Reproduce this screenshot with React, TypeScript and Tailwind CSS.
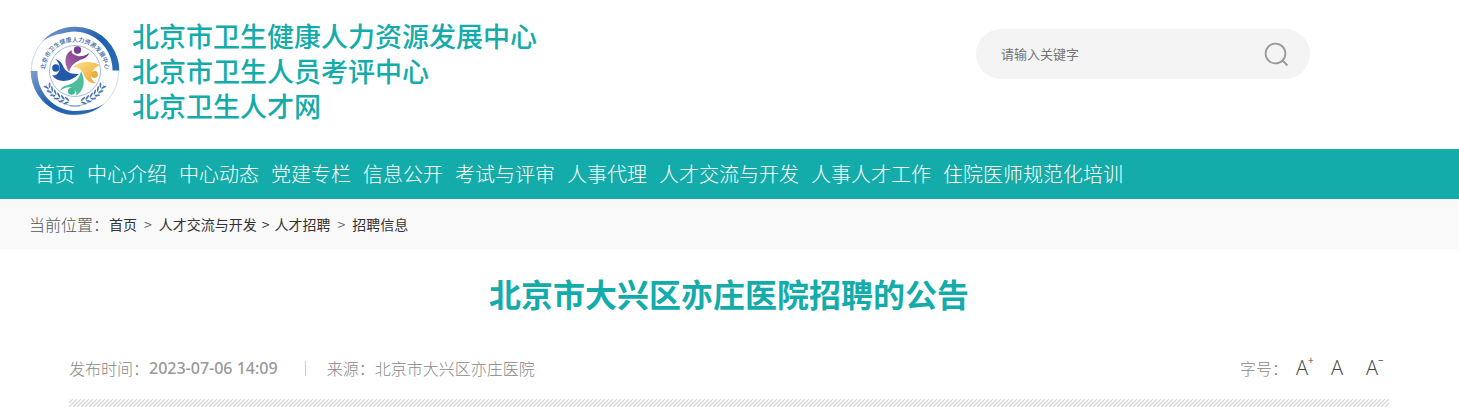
const NAV_LINKS = [
  "首页",
  "中心介绍",
  "中心动态",
  "党建专栏",
  "信息公开",
  "考试与评审",
  "人事代理",
  "人才交流与开发",
  "人事人才工作",
  "住院医师规范化培训",
];

const SITE_NAMES = [
  "北京市卫生健康人力资源发展中心",
  "北京市卫生人员考评中心",
  "北京卫生人才网",
];

const BREADCRUMBS = [
  { label: "首页", sep: "mx-[7px] text-[#666]" },
  { label: "人才交流与开发", sep: "mx-[5px] text-[#333]" },
  { label: "人才招聘", sep: "mx-[7px] text-[#666]" },
  { label: "招聘信息", sep: "" },
];

const FONT_SIZES = [
  { sign: "+", label: "放大字号" },
  { sign: "", label: "默认字号" },
  { sign: "−", label: "缩小字号" },
];

const LEAVES = [12, 21, 30, 39, 48, 57];

function Emblem() {
  return (
    <svg viewBox="0 0 90 90" className="mt-2 size-[90px] shrink-0" role="img" aria-label="北京市卫生健康人力资源发展中心">
      <defs>
        <path id="ring-text" d="M15.5 51 A30 30 0 1 1 74.5 51" />
        <linearGradient id="ring" x1="0" y1="0" x2="1" y2="1">
          <stop offset="0" stopColor="#7f9fd0" />
          <stop offset="0.5" stopColor="#1f5fae" />
          <stop offset="1" stopColor="#2c6cb6" />
        </linearGradient>
        <linearGradient id="purple" x1="1" y1="0" x2="0" y2="1">
          <stop offset="0" stopColor="#6d2f86" />
          <stop offset="1" stopColor="#b56cae" />
        </linearGradient>
        <linearGradient id="gold" x1="0" y1="0" x2="1" y2="1">
          <stop offset="0" stopColor="#fbe08c" />
          <stop offset="1" stopColor="#eda52c" />
        </linearGradient>
      </defs>
      <circle cx="45" cy="45" r="43.8" fill="#fff" stroke="#b9cbe5" strokeWidth="0.7" />
      {/* outer crescents */}
      <path d="M12 15.5 A44.3 44.3 0 0 1 89.3 44.5 L82.5 44.5 A38.5 38.5 0 0 0 32 7.5 A44 44 0 0 0 12 15.5Z" fill="url(#ring)" />
      <path d="M0.7 45 L7.5 45 A38.5 38.5 0 0 0 52 84.5 A46 46 0 0 0 74 78 A44.3 44.3 0 0 1 0.7 45Z" fill="url(#ring)" />
      <circle cx="45" cy="45" r="25.5" fill="#fff" stroke="#8fabd3" strokeWidth="0.8" />
      <text fontSize="6" fill="#3b69a8" fontFamily="'Liberation Serif', 'Noto Sans CJK SC', serif">
        <textPath href="#ring-text" startOffset="50%" textAnchor="middle">
          北京市卫生健康人力资源发展中心
        </textPath>
      </text>
      {/* wheat ears */}
      {LEAVES.map((angle) => (
        <g key={angle} fill="#4a77b5">
          <g transform={`rotate(${angle} 45 45)`}>
            <ellipse cx="43" cy="74" rx="2.9" ry="0.9" transform="rotate(32 43 74)" />
            <ellipse cx="43" cy="78" rx="2.9" ry="0.9" transform="rotate(-32 43 78)" />
          </g>
          <g transform={`rotate(${-angle} 45 45)`}>
            <ellipse cx="47" cy="74" rx="2.9" ry="0.9" transform="rotate(-32 47 74)" />
            <ellipse cx="47" cy="78" rx="2.9" ry="0.9" transform="rotate(32 47 78)" />
          </g>
        </g>
      ))}
      <path d="M16 59 A33 33 0 0 0 50 80 M74 59 A33 33 0 0 1 40 80" fill="none" stroke="#4a77b5" strokeWidth="0.6" />
      {/* four figures */}
      <path d="M42 24 C35 27 33 36 39 46 C41 39 46 35 53 33 C57 31 59 29 59 27 C54 31 49 31 45 29 C42 28 41 26 42 24Z" fill="url(#purple)" />
      <circle cx="47.5" cy="24" r="3.7" fill="#7c3b92" />
      <path d="M43 41 C49 36 60 34 70 39 C66 41 63 43 62 46 C60 51 62 55 66 57 C60 58 56 54 54 49 C52 44 49 41 43 41Z" fill="url(#gold)" />
      <circle cx="64.5" cy="48.5" r="3.4" fill="#efac38" />
      <path d="M25 33 C30 37 31 43 28 47 C27 49 24 50 22 49 C27 57 40 57 49 48 C42 48 37 47 34 42 C32 37 30 34 25 33Z" fill="#2459a9" />
      <circle cx="25.8" cy="42" r="3.7" fill="#2459a9" />
      <path d="M51 45 C50 52 45 57 38 59 C33 60 31 62 30 65 C36 60 43 60 46 66 C47 68 46 69 45 70 C54 66 56 55 51 45Z" fill="#4dbd9c" />
      <circle cx="41.5" cy="65.3" r="3.5" fill="#3fb894" />
    </svg>
  );
}

function SearchBox() {
  return (
    <form className="flex h-[50px] w-[334px] items-center rounded-full bg-[#f4f4f4] pr-[21px] pl-[25px]" onSubmit={(e) => e.preventDefault()}>
      <input
        type="text"
        aria-label="请输入关键字"
        placeholder="请输入关键字"
        className="min-w-0 flex-1 bg-transparent text-[13px] outline-none placeholder:text-[#757575]"
      />
      <button type="submit" aria-label="搜索">
        <svg viewBox="0 0 25 25" className="size-[25px]" fill="none" stroke="#999" strokeWidth="1.8">
          <circle cx="11.5" cy="11.5" r="9.9" />
          <path d="M18.5 18.5 L23.5 23.5" />
        </svg>
      </button>
    </form>
  );
}

export default function App() {
  return (
    <div className="min-h-screen bg-white font-['Noto_Sans_CJK_SC',sans-serif]">
      {/* Header */}
      <header className="flex items-start justify-between pt-[18px] pr-[149px] pb-[26px] pl-[30px]">
        <a href="#" className="flex items-start gap-3 text-[27px] leading-[35px] font-medium text-[#14acaa]">
          <Emblem />
          <span className="whitespace-pre">{SITE_NAMES.join("\n")}</span>
        </a>
        <div className="pt-[11px]">
          <SearchBox />
        </div>
      </header>

      {/* Navigation */}
      <nav className="bg-[#14acaa] pl-[35px]">
        <ul className="flex gap-3 text-[20px] leading-[50px] font-light whitespace-nowrap text-white">
          {NAV_LINKS.map((label) => (
            <li key={label}>
              <a href="#">{label}</a>
            </li>
          ))}
        </ul>
      </nav>

      {/* Breadcrumb */}
      <div className="flex items-center bg-[#f9f9f9] pl-[29px] text-[14px] leading-[50px] text-[#333]">
        <span className="text-[16px] font-light text-[#555]">当前位置：</span>
        {BREADCRUMBS.map(({ label, sep }) => (
          <span key={label}>
            <a href="#">{label}</a>
            {sep && <span className={sep}>&gt;</span>}
          </span>
        ))}
      </div>

      {/* Article */}
      <main className="pr-[70px] pl-[69px]">
        <h1 className="pt-5 text-center text-[32px] leading-[48px] font-bold text-[#14acaa]">
          北京市大兴区亦庄医院招聘的公告
        </h1>
        <div className="flex items-center justify-between pt-9 text-[16px] leading-[30px] font-light text-[#888]">
          <div className="flex items-center">
            <span>发布时间：</span>
            <time className="font-['Noto_Sans',sans-serif] font-medium text-[#999]">2023-07-06 14:09</time>
            <span className="mr-[21px] ml-[27px] h-[15px] w-px bg-[#ccc]" />
            <span>来源：北京市大兴区亦庄医院</span>
          </div>
          <div className="flex items-center gap-3">
            <span className="-mr-1">字号：</span>
            {FONT_SIZES.map(({ sign, label }) => (
              <button
                key={label}
                type="button"
                aria-label={label}
                className="relative h-[30px] w-[23px] text-left font-['Open_Sans',sans-serif] text-[20px] font-light text-[#444]"
              >
                A
                {sign && <span className="absolute -top-2 left-3 text-[10px] font-normal">{sign}</span>}
              </button>
            ))}
          </div>
        </div>
        <svg className="mt-4 block h-2 w-full" aria-hidden="true">
          <defs>
            <pattern id="hatch" width="4" height="8" patternUnits="userSpaceOnUse">
              <path d="M-8 8 L0 0 M-4 8 L4 0 M0 8 L8 0" stroke="#dadada" strokeWidth="1.3" />
            </pattern>
          </defs>
          <rect width="100%" height="8" fill="url(#hatch)" />
        </svg>
      </main>
    </div>
  );
}
